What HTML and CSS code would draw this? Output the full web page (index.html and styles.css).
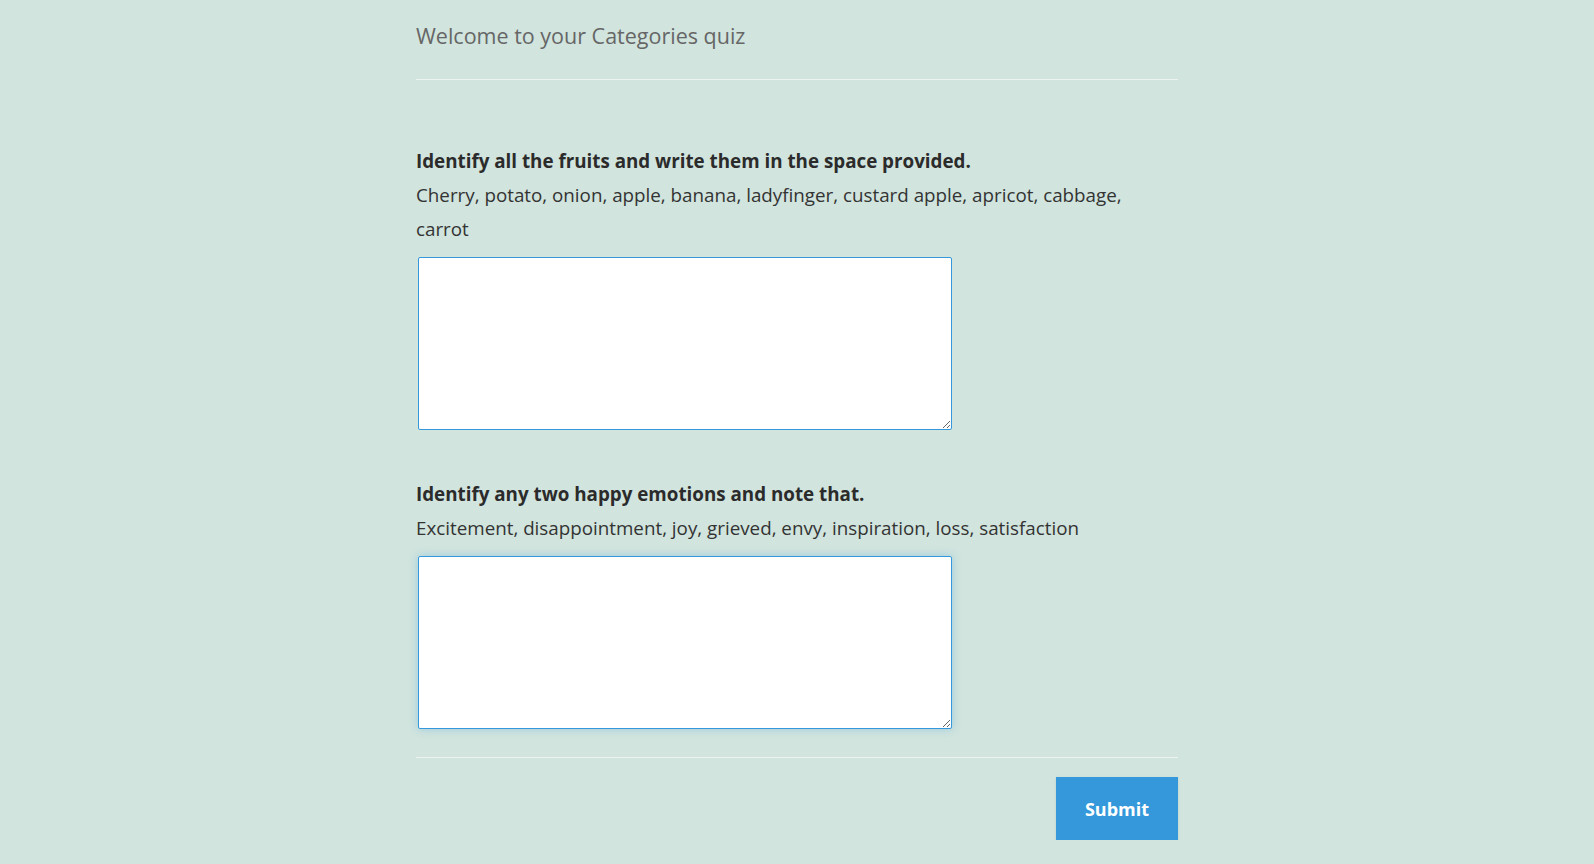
FILE: index.html
```html
<!DOCTYPE html>
<html lang="en">
<head>
    <meta charset="UTF-8">
    <meta name="viewport" content="width=device-width, initial-scale=1.0">
    <title>Categories quiz</title>
    <link rel="stylesheet" href="styles.css">
</head>
<body>
    <div class="quiz">
        <h1 class="quiz-title">Welcome to your Categories quiz</h1>

        <form class="quiz-form" onsubmit="return false;">
            <div class="question">
                <p class="question-title">Identify all the fruits and write them in the space provided.</p>
                <p class="question-text">Cherry, potato, onion, apple, banana, ladyfinger, custard apple, apricot, cabbage, carrot</p>
                <textarea class="answer" name="q1"></textarea>
            </div>

            <div class="question">
                <p class="question-title">Identify any two happy emotions and note that.</p>
                <p class="question-text">Excitement, disappointment, joy, grieved, envy, inspiration, loss, satisfaction</p>
                <textarea class="answer answer-focus" name="q2"></textarea>
            </div>

            <div class="quiz-footer">
                <button type="submit" class="submit-btn">Submit</button>
            </div>
        </form>
    </div>
</body>
</html>
```

FILE: styles.css
```css
body {
    margin: 0;
    background-color: #d1e4de;
    font-family: "Open Sans", "Noto Sans", Arial, sans-serif;
    color: #333;
}
.quiz {
    width: 762px;
    margin: 0 auto;
}
.quiz-title {
    margin: 0;
    padding: 19px 0 26px;
    font-size: 21.5px;
    font-weight: normal;
    line-height: 34px;
    color: #666;
    border-bottom: 1px solid #ecf3f0;
}
.question {
    padding-top: 64px;
}
.question + .question {
    padding-top: 47px;
}
.question-title {
    margin: 0;
    font-size: 18.8px;
    font-weight: bold;
    line-height: 34px;
    color: #2b2b2b;
}
.question-text {
    margin: 0;
    font-size: 18.8px;
    line-height: 34px;
    color: #333;
}
.answer {
    display: block;
    width: 534px;
    height: 173px;
    margin: 11px 0 0 2px;
    padding: 6px;
    border: 1px solid #3498db;
    border-radius: 2px;
    background: #fff;
    box-sizing: border-box;
    font-family: inherit;
    font-size: 16px;
}
.answer-focus {
    box-shadow: 0 0 8px rgba(52, 152, 219, 0.35);
    outline: none;
}
.quiz-footer {
    display: flex;
    justify-content: flex-end;
    margin-top: 28px;
    padding-top: 19px;
    border-top: 1px solid #ecf3f0;
}
.submit-btn {
    width: 122px;
    height: 63px;
    border: none;
    background-color: #3498db;
    color: #fff;
    font-family: inherit;
    font-size: 18px;
    font-weight: bold;
    cursor: pointer;
    box-shadow: 0 1px 3px rgba(0, 0, 0, 0.08);
}
.submit-btn:hover {
    background-color: #2e8ccb;
}
```
